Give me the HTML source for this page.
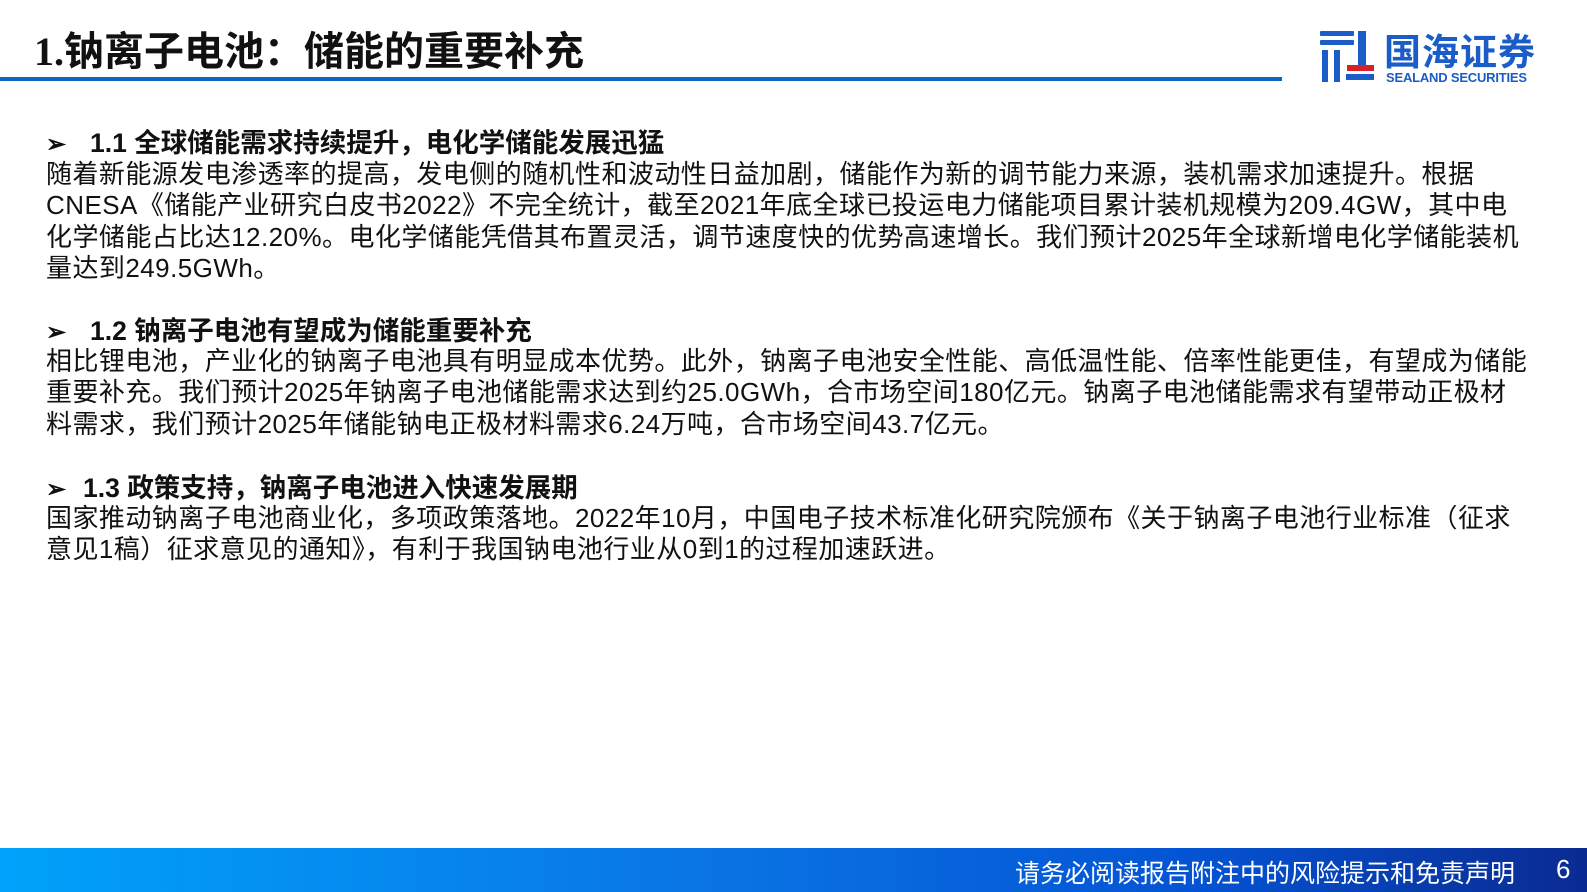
<!DOCTYPE html>
<html><head><meta charset="utf-8"><style>
*{margin:0;padding:0;box-sizing:border-box}
body{width:1587px;height:892px;position:relative;background:#fff;overflow:hidden;font-family:"Liberation Sans","Noto Sans CJK SC",sans-serif;color:#111}
.title{position:absolute;left:34px;top:19px;font-size:40px;font-weight:bold;white-space:nowrap;color:#111}
.title .n{font-family:"Liberation Serif",serif}
.bar{position:absolute;left:0;top:77px;width:1282px;height:4px;background:#1163c6}
.h{position:absolute;left:46px;font-size:26.5px;font-weight:bold;white-space:nowrap}
.h .a{display:inline-block;width:44px;font-size:24px}
.p{position:absolute;left:46px;font-size:26px;line-height:31.3px;white-space:nowrap;letter-spacing:0.45px}
.foot{position:absolute;left:0;top:848px;width:1587px;height:44px;background:linear-gradient(90deg,#00a2fa 0%,#0a74e4 45%,#0454d4 75%,#0a2a92 100%)}
.foot span{position:absolute;color:#fff;font-size:25px;top:6px}
</style></head><body>
<div class="title"><span class="n">1.</span>钠离子电池：储能的重要补充</div>
<div class="bar"></div>
<svg style="position:absolute;left:1318px;top:29px" width="60" height="56">
<g fill="#1a5cc8">
<rect x="2" y="2" width="34" height="5" rx="1"/>
<rect x="2" y="11" width="34" height="5" rx="1"/>
<rect x="4" y="21" width="6" height="32"/>
<rect x="16" y="21" width="6" height="32"/>
<rect x="40" y="2" width="8" height="38"/>
<rect x="28" y="45" width="28" height="6"/>
</g>
<rect x="29" y="36" width="27" height="6" fill="#d8202a"/>
</svg>
<div style="position:absolute;left:1384px;top:22px;font-size:37px;font-weight:bold;color:#1a5cc8;letter-spacing:1px;white-space:nowrap">国海证券</div>
<div style="position:absolute;left:1386px;top:70px;font-size:13px;font-weight:bold;color:#1a5cc8;white-space:nowrap;letter-spacing:-0.2px">SEALAND SECURITIES</div>

<div class="h" style="top:121px"><span class="a">➢</span>1.1 全球储能需求持续提升，电化学储能发展迅猛</div>
<div class="p" style="top:159px">随着新能源发电渗透率的提高，发电侧的随机性和波动性日益加剧，储能作为新的调节能力来源，装机需求加速提升。根据<br>CNESA《储能产业研究白皮书2022》不完全统计，截至2021年底全球已投运电力储能项目累计装机规模为209.4GW，其中电<br>化学储能占比达12.20%。电化学储能凭借其布置灵活，调节速度快的优势高速增长。我们预计2025年全球新增电化学储能装机<br>量达到249.5GWh。</div>

<div class="h" style="top:309px"><span class="a">➢</span>1.2 钠离子电池有望成为储能重要补充</div>
<div class="p" style="top:346px">相比锂电池，产业化的钠离子电池具有明显成本优势。此外，钠离子电池安全性能、高低温性能、倍率性能更佳，有望成为储能<br>重要补充。我们预计2025年钠离子电池储能需求达到约25.0GWh，合市场空间180亿元。钠离子电池储能需求有望带动正极材<br>料需求，我们预计2025年储能钠电正极材料需求6.24万吨，合市场空间43.7亿元。</div>

<div class="h" style="top:466px"><span class="a" style="width:37px">➢</span>1.3 政策支持，钠离子电池进入快速发展期</div>
<div class="p" style="top:503px">国家推动钠离子电池商业化，多项政策落地。2022年10月，中国电子技术标准化研究院颁布《关于钠离子电池行业标准（征求<br>意见1稿）征求意见的通知》，有利于我国钠电池行业从0到1的过程加速跃进。</div>

<div class="foot"><span style="left:1015px">请务必阅读报告附注中的风险提示和免责声明</span><span style="left:1556px;font-size:26px">6</span></div>
</body></html>
